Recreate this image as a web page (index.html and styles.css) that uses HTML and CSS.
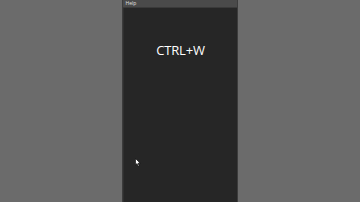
FILE: index.html
```html
<!DOCTYPE html>
<html lang="en">
<head>
    <meta charset="UTF-8">
    <meta name="viewport" content="width=device-width, initial-scale=1.0">
    <title>Shortcut</title>
    <link rel="stylesheet" href="styles.css">
</head>
<body>
    <div class="ventana">
        <div class="barra-menu">
            <span class="menu-item">Help</span>
        </div>
        <div class="panel">
            <div class="atajo">CTRL+W</div>
            <svg class="cursor" width="6" height="9" viewBox="0 0 6 9">
                <path d="M0.5 0.5 L0.5 7 L2 5.6 L3.2 8.3 L4.2 7.8 L3 5.2 L5.2 5.2 Z" fill="#fff" stroke="#000" stroke-width="0.6"/>
            </svg>
        </div>
    </div>
</body>
</html>
```

FILE: styles.css
```css
body {
    margin: 0;
    height: 202px;
    background-color: #6b6b6b;
    font-family: "Open Sans", sans-serif;
    display: flex;
    justify-content: center;
    overflow: hidden;
}

.ventana {
    width: 114px;
    margin-left: -1px;
    display: flex;
    flex-direction: column;
    background-color: #262626;
    border-left: 1px solid #3c3c3c;
    border-right: 1px solid #3c3c3c;
}

.barra-menu {
    height: 7px;
    background-color: #4a4a4a;
    border-bottom: 1px solid #3a3a3a;
    display: flex;
    align-items: center;
    padding-left: 3px;
}

.menu-item {
    color: #e0e0e0;
    font-size: 5px;
    line-height: 7px;
}

.panel {
    flex: 1;
    position: relative;
    border-left: 1px solid #2f2f2f;
}

.atajo {
    color: #ffffff;
    font-size: 13px;
    letter-spacing: -0.2px;
    text-align: center;
    margin-top: 33px;
    padding-left: 1px;
}

.cursor {
    position: absolute;
    left: 11px;
    top: 150px;
}
```
